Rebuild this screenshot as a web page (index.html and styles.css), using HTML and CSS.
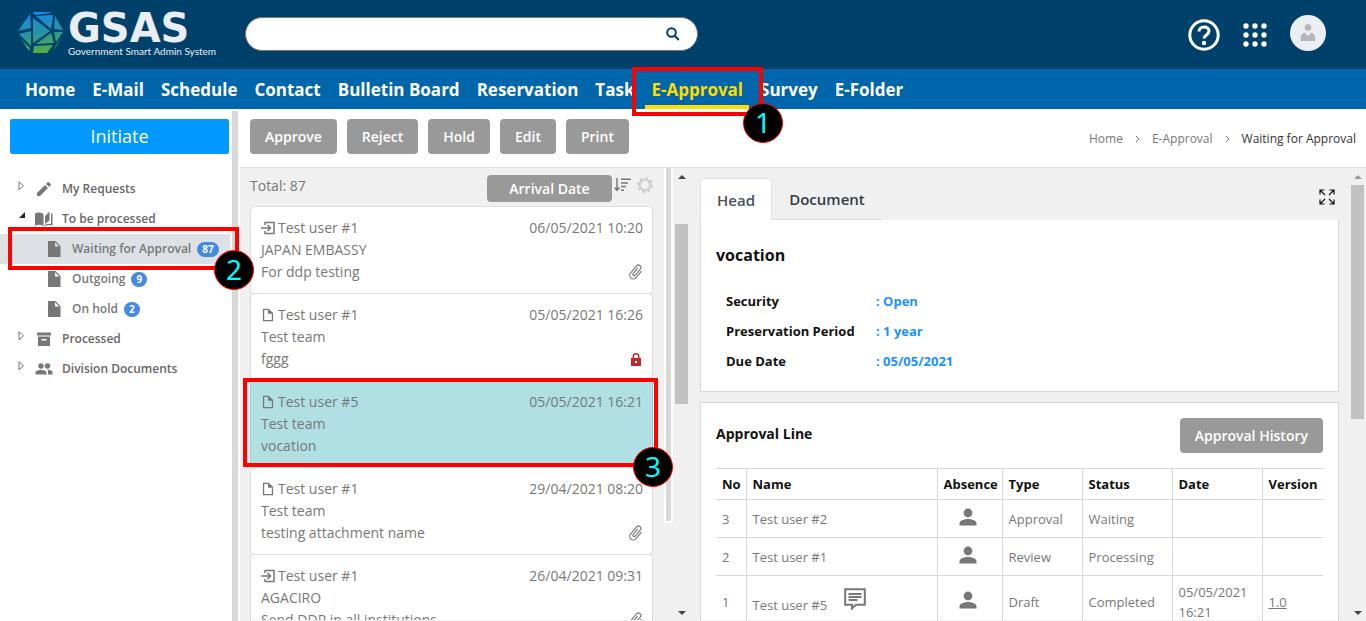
FILE: index.html
```html
<!DOCTYPE html>
<html lang="en">
<head>
<meta charset="utf-8">
<title>GSAS - Waiting for Approval</title>
<link rel="stylesheet" href="styles.css">
</head>
<body>
<svg class="defs" aria-hidden="true">
  <symbol id="i-clip" viewBox="4 0 17 24"><path d="M16.500 6v11.500a4 4 0 0 1-8 0V5a2.500 2.500 0 0 1 5 0v10.500a1 1 0 0 1-2 0V6H10v9.500a2.500 2.500 0 0 0 5 0V5a4 4 0 0 0-8 0v12.500a5.500 5.500 0 0 0 11 0V6z" transform="rotate(40 12 12)"/></symbol>
  <symbol id="i-file" viewBox="2 1 20 22"><path d="M13 2H4v20h16V9l-7-7zM6 20V4h6v6h6v10z"/></symbol>
  <symbol id="i-doc" viewBox="0 0 13 16"><path d="M0 0h7.500L12.500 5v11H0zM7 1.200v4.300h4.300z" fill-rule="evenodd"/></symbol>
  <symbol id="i-in" viewBox="0 0 14 14"><path d="M4 4V1.500h9v11H4V10M0 7h9M6.500 4L9.500 7l-3 3" fill="none" stroke="currentColor" stroke-width="1.500"/></symbol>
  <symbol id="i-person" viewBox="0 0 18 18"><circle cx="9" cy="5" r="4.400"/><path d="M.5 17.500v-2C.5 12.500 5 11 9 11s8.500 1.500 8.500 4.500v2z"/></symbol>
  <symbol id="i-closed" viewBox="0 0 8 10"><path d="M1 .8v8L5.500 4.800z" fill="none" stroke="#777"/></symbol>
</svg>

<header class="topbar">
  <a class="logo" href="#">
    <svg class="logo-mark" viewBox="0 0 46 42">
      <defs><linearGradient id="g" gradientUnits="userSpaceOnUse" x1="18" y1="0" x2="26" y2="42"><stop offset="0" stop-color="#1688ee"/><stop offset=".5" stop-color="#2794a0"/><stop offset="1" stop-color="#55b436"/></linearGradient></defs>
      <g fill="url(#g)">
        <path d="M15 0h17l1 1-16 2zM12 2l1 14L0 19zM1 22l12-3v15zM15 6l17 13-17 12zM18 4l17-1-2 14zM33 21l3 10-18 1zM16 34l19-1-6 8H15zM3 27l9 9-1 3zM37 4l8 14-9-1zM36 20h9l-7 10zM38 33l6-8-9 14z"/>
      </g>
    </svg>
    <span class="logo-text"><b>GSAS</b><small>Government Smart Admin System</small></span>
  </a>
  <form class="search">
    <input type="text" aria-label="Search">
    <button type="button" aria-label="Search"><svg viewBox="0 0 14 14"><circle cx="5.500" cy="5.500" r="4.300"/><path d="M8.700 8.700L12.800 13"/></svg></button>
  </form>
  <div class="top-actions">
    <button class="help" type="button" aria-label="Help"><svg viewBox="0 0 32 32"><circle cx="16" cy="16" r="14.200"/><path d="M11 12.500c0-6 10-6 10-.5 0 4-5 3.800-5 7.500"/><circle class="dot" cx="16" cy="24" r="2.200"/></svg></button>
    <button class="apps" type="button" aria-label="Apps"><svg viewBox="0 0 24 24"><g><circle cx="3" cy="3" r="2.700"/><circle cx="12" cy="3" r="2.700"/><circle cx="21" cy="3" r="2.700"/><circle cx="3" cy="12" r="2.700"/><circle cx="12" cy="12" r="2.700"/><circle cx="21" cy="12" r="2.700"/><circle cx="3" cy="21" r="2.700"/><circle cx="12" cy="21" r="2.700"/><circle cx="21" cy="21" r="2.700"/></g></svg></button>
    <button class="avatar" type="button" aria-label="Profile"><svg viewBox="0 0 16 18"><circle cx="8" cy="3.500" r="3.200"/><path d="M1 17c-1-4 0-7 3.500-8.500L8 12l3.500-3.500C15 10 16 13 15 17z"/></svg></button>
  </div>
</header>

<nav class="mainnav">
  <a href="#">Home</a><a href="#">E-Mail</a><a href="#">Schedule</a><a href="#">Contact</a><a href="#">Bulletin Board</a><a href="#">Reservation</a><a href="#">Task</a><a class="current" href="#">E-Approval</a><a href="#">Survey</a><a href="#">E-Folder</a>
</nav>

<div class="body">
  <aside class="sidebar">
    <button class="initiate" type="button">Initiate</button>
    <div class="tree">
      <a href="#"><svg class="tw"><use href="#i-closed"/></svg><svg class="ti" viewBox="0 0 16 16"><path d="M1 12v3h3l8-8-3-3zM14.700 4.300a1 1 0 0 0 0-1.200l-1.800-1.800a1 1 0 0 0-1.200 0L10 3l3 3z"/></svg>My Requests</a>
      <a href="#"><svg class="tw open" viewBox="0 0 8 10"><path d="M7 1v6H1z"/></svg><svg class="ti" viewBox="0 0 18 16"><path d="M0 2.500C3 1 6 1.500 8.500 3v12C6 13.500 3 13.500 0 14.500zM10 5l4.500-4.500v9L10 13zM16 2.500h1.500v12c-3-1-5-.8-8 .7V14c2-1.200 4.500-1.500 6.500-1z"/></svg>To be processed</a>
      <a class="sub selected" href="#"><svg class="td"><use href="#i-doc"/></svg>Waiting for Approval<span class="badge">87</span></a>
      <a class="sub" href="#"><svg class="td"><use href="#i-doc"/></svg>Outgoing<span class="badge">9</span></a>
      <a class="sub" href="#"><svg class="td"><use href="#i-doc"/></svg>On hold<span class="badge">2</span></a>
      <a href="#"><svg class="tw"><use href="#i-closed"/></svg><svg class="ti" viewBox="0 0 16 16"><path fill-rule="evenodd" d="M1 1.500h14v3H1zM2 5.500h12V15H2zM5.500 8v1.500h5V8z"/></svg>Processed</a>
      <a href="#"><svg class="tw"><use href="#i-closed"/></svg><svg class="ti" viewBox="0 0 18 16"><circle cx="6" cy="5" r="2.700"/><circle cx="12.500" cy="5" r="2.700"/><path d="M.5 13.500v-2c0-3.500 11-3.500 11 0v2zM13 13.500h4.500v-2c0-2-2.500-3-5.500-2.700 1 .7 1.200 1.600 1 4.700z"/></svg>Division Documents</a>
    </div>
  </aside>
  <div class="splitter"></div>

  <main class="main">
    <div class="toolbar">
      <div class="actions">
        <button class="btn" type="button">Approve</button><button class="btn" type="button">Reject</button><button class="btn" type="button">Hold</button><button class="btn" type="button">Edit</button><button class="btn" type="button">Print</button>
      </div>
      <div class="crumbs">
        <a href="#">Home</a><svg viewBox="0 0 5 8"><path d="M1 1l3 3-3 3"/></svg><a href="#">E-Approval</a><svg viewBox="0 0 5 8"><path d="M1 1l3 3-3 3"/></svg><span>Waiting for Approval</span>
      </div>
    </div>

    <div class="panes">
      <section class="list">
        <div class="list-head">
          <span class="total">Total: 87</span>
          <button class="btn sort" type="button">Arrival Date</button>
          <svg class="sort-ic" viewBox="0 0 17 14"><path d="M3 0v12M.5 9.500L3 12.300l2.500-2.800M7 1.300h10M7 5h7M7 8.600h5M7 12.300h3"/></svg>
          <svg class="gear" viewBox="0 0 16 16"><circle cx="8" cy="8" r="5.300"/><circle class="teeth" cx="8" cy="8" r="7"/></svg>
        </div>
        <article class="card"><div><svg class="in"><use href="#i-in"/></svg>Test user #1<time>06/05/2021 10:20</time></div><div>JAPAN EMBASSY</div><div>For ddp testing<svg class="clip"><use href="#i-clip"/></svg></div></article>
        <article class="card"><div><svg class="in"><use href="#i-file"/></svg>Test user #1<time>05/05/2021 16:26</time></div><div>Test team</div><div>fggg<svg class="lock" viewBox="0 0 10 13"><path fill-rule="evenodd" d="M0 5h1.500V3.500a3.500 3.500 0 0 1 7 0V5H10v8H0zM3 5h4V3.500a2 2 0 0 0-4 0zM4 8v2h2V8z"/></svg></div></article>
        <article class="card chosen"><div><svg class="in"><use href="#i-file"/></svg>Test user #5<time>05/05/2021 16:21</time></div><div>Test team</div><div>vocation</div></article>
        <article class="card"><div><svg class="in"><use href="#i-file"/></svg>Test user #1<time>29/04/2021 08:20</time></div><div>Test team</div><div>testing attachment name<svg class="clip"><use href="#i-clip"/></svg></div></article>
        <article class="card"><div><svg class="in"><use href="#i-in"/></svg>Test user #1<time>26/04/2021 09:31</time></div><div>AGACIRO</div><div>Send DDP in all institutions<svg class="clip"><use href="#i-clip"/></svg></div></article>
      </section>
      <div class="splitter inner"></div>
      <div class="scroll mid"><i class="up"></i><i class="thumb"></i><i class="down"></i></div>

      <section class="detail">
        <div class="tabs">
          <button class="tab on" type="button">Head</button><button class="tab" type="button">Document</button>
          <svg class="expand" viewBox="0 0 16 16"><path d="M1 5.500V1h4.500M1 1l5 5M10.500 1H15v4.500M15 1l-5 5M1 10.500V15h4.500M1 15l5-5M15 10.500V15h-4.500M15 15l-5-5"/></svg>
        </div>
        <div class="panel first">
          <h2>vocation</h2>
          <dl><dt>Security</dt><dd>: Open</dd><dt>Preservation Period</dt><dd>: 1 year</dd><dt>Due Date</dt><dd>: 05/05/2021</dd></dl>
        </div>
        <div class="panel second">
          <div class="panel-head"><h3>Approval Line</h3><button class="btn" type="button">Approval History</button></div>
          <table>
            <colgroup><col class="c-no"><col><col class="c-abs"><col class="c-type"><col class="c-wide"><col class="c-wide"><col class="c-ver"></colgroup>
            <thead><tr><th>No</th><th>Name</th><th>Absence</th><th>Type</th><th>Status</th><th>Date</th><th>Version</th></tr></thead>
            <tbody>
              <tr><td>3</td><td>Test user #2</td><td class="mid-cell"><svg class="person"><use href="#i-person"/></svg></td><td>Approval</td><td>Waiting</td><td></td><td></td></tr>
              <tr><td>2</td><td>Test user #1</td><td class="mid-cell"><svg class="person"><use href="#i-person"/></svg></td><td>Review</td><td>Processing</td><td></td><td></td></tr>
              <tr class="tall"><td>1</td><td>Test user #5<svg class="note" viewBox="0 0 22 22"><path d="M1.200 1.200h19.600v15.600H12L8 20.500v-3.700H1.200zM4.500 6h13M4.500 9h13M4.500 12h9"/></svg></td><td class="mid-cell"><svg class="person"><use href="#i-person"/></svg></td><td>Draft</td><td>Completed</td><td>05/05/2021 16:21</td><td><a href="#">1.0</a></td></tr>
            </tbody>
          </table>
        </div>
      </section>
      <div class="scroll far"><i class="up"></i><i class="thumb"></i><i class="down"></i></div>
    </div>
  </main>
</div>

<div class="mark m1"><span>1</span></div>
<div class="mark m2"><span>2</span></div>
<div class="mark m3"><span>3</span></div>
</body>
</html>
```
FILE: styles.css
```css
* { box-sizing: border-box; }
body {
  margin: 0; height: 100vh; overflow: hidden; position: relative;
  display: flex; flex-direction: column;
  font: 14px/22px "Open Sans", "Noto Sans", sans-serif; color: #777; background: #fff;
}
a { color: inherit; text-decoration: none; }
button { font: inherit; border: 0; padding: 0; background: none; color: inherit; }
svg { flex: none; fill: currentColor; }
.defs { position: absolute; width: 0; height: 0; }

/* top bar */
.topbar { flex: none; height: 69px; display: flex; align-items: center; background: #00416b; color: #fff; padding: 0 40px 0 18px; }
.logo { display: flex; gap: 4px; width: 227px; color: #e8eef3; }
.logo-mark { width: 46px; height: 42px; }
.logo-text { display: flex; flex-direction: column; }
.logo-text b { font: bold 40px/32px "DejaVu Sans", sans-serif; }
.logo-text small { font: 10px/14px Lato, sans-serif; white-space: nowrap; }
.search { display: flex; width: 453px; height: 34px; margin-bottom: 2px; background: #fff; border: 1px solid #777; border-radius: 17px; padding: 0 17px 0 16px; align-items: center; }
.search input { flex: 1; min-width: 0; border: 0; outline: 0; background: none; font: inherit; }
.search button { display: flex; }
.search svg { width: 14px; height: 14px; fill: none; stroke: #00416b; stroke-width: 2; }
.top-actions { margin-left: auto; display: flex; align-items: center; gap: 23px; }
.top-actions button { display: flex; }
.help svg { width: 32px; height: 32px; fill: none; stroke: #fff; stroke-width: 3; }
.help .dot { fill: #fff; stroke: none; }
.apps svg { width: 24px; height: 24px; }
.top-actions .avatar { width: 36px; height: 36px; margin-bottom: 4px; border-radius: 50%; background: #eceff1; color: #b4b6b8; align-items: center; justify-content: center; }
.avatar svg { width: 16px; height: 18px; }

/* navigation */
.mainnav { flex: none; height: 40px; display: flex; gap: 5px; padding-left: 19px; background: #0066ab; color: #fff; font-weight: 700; font-size: 17px; }
.mainnav a { padding: 4px 6px 0; border-bottom: 4px solid transparent; line-height: 34px; white-space: nowrap; }
.mainnav .current { color: #ffdc00; border-color: #ffdc00; }

/* page frame */
.body { flex: 1; min-height: 0; display: flex; }
.sidebar { width: 232px; flex: none; padding-top: 10px; }
.initiate { display: block; width: 219px; height: 35px; margin-left: 10px; padding-bottom: 2px; border-radius: 2px; background: #0099ff; color: #fff; font-size: 18px; }
.tree { padding-top: 20px; font-size: 12px; font-weight: 600; color: #666; }
.tree a { display: flex; align-items: center; height: 30px; padding-left: 18px; white-space: nowrap; }
.tree .sub { padding-left: 48px; color: #777; margin-right: 2px; }
.tree .selected { background: #dde1e6; }
.tw { width: 8px; height: 10px; margin: 0 9px 6px 0; }
.tw.open { color: #222; }
.ti { width: 18px; height: 16px; margin-right: 9px; color: #777; }
.td { width: 13px; height: 16px; margin-right: 11px; color: #777; }
.badge { margin-left: 6px; min-width: 15px; height: 15px; border-radius: 8px; padding: 0 5px; background: #4489e4; color: #fff; font-size: 10px; line-height: 15px; font-weight: 700; text-align: center; }
.splitter { flex: none; width: 6px; margin-top: 2px; background: #d8d8d8; }

.main { flex: 1; min-width: 0; display: flex; flex-direction: column; margin-left: 2px; }
.toolbar { flex: none; height: 59px; padding: 10px; border-bottom: 1px solid #ddd; display: flex; justify-content: space-between; }
.actions { display: flex; gap: 10px; }
.btn { height: 35px; padding: 0 15px; border-radius: 4px; background: #999; color: #fff; font-weight: 600; white-space: nowrap; }
.crumbs { display: flex; align-items: center; gap: 12px; height: 39px; font-size: 12px; }
.crumbs svg { width: 5px; height: 8px; fill: none; stroke: #777; }
.crumbs span { color: #333; }

.panes { flex: 1; min-height: 0; display: flex; background: #f0f0f0; }

/* document list */
.list { flex: none; width: 424px; padding: 0 11px 0 10px; margin-bottom: 1px; overflow: hidden; }
.list-head { display: flex; align-items: flex-start; height: 38px; padding-top: 7px; }
.total { margin-right: auto; }
.list-head .sort { width: 125px; height: 27px; margin-right: 2px; }
.sort-ic { width: 17px; height: 14px; margin-top: 3px; fill: none; stroke: #777; stroke-width: 1.5; }
.gear { width: 16px; height: 16px; margin: 2px 0 0 6px; fill: none; stroke: #ccc; stroke-width: 2; }
.gear .teeth { stroke-width: 2; stroke-dasharray: 2.5 3; }
.card { height: 88px; margin-bottom: -1px; padding: 10px 9px 10px 10px; border: 1px solid #ddd; border-radius: 4px; background: #fff; }
.card div { display: flex; align-items: center; }
.card time { margin-left: auto; }
.card.chosen { background: #b0dfe4; border-color: #a0cdd2; }
.in { width: 14px; height: 14px; margin-right: 3px; }
.clip { width: 14px; height: 18px; margin-left: auto; }
.lock { width: 10px; height: 13px; margin: 0 2px 0 auto; color: #bb2a30; }

.inner { width: 9px; height: 355px; margin: 0; border: 2px solid #fff; border-top: 0; }

.scroll { flex: none; width: 17px; display: flex; flex-direction: column; align-items: center; padding: 7px 0 6px; }
.scroll i { width: 0; }
.scroll .up { border: 4px solid transparent; border-top: 0; border-bottom-color: #444; }
.scroll .down { margin-top: auto; border: 4px solid transparent; border-bottom: 0; border-top-color: #444; }
.scroll .thumb { width: 13px; background: #c1c1c1; }
.mid .thumb { height: 180px; margin-top: 45px; }
.far .thumb { height: 234px; margin-top: 6px; }
.far .up { border-bottom-color: #999; }

/* detail */
.detail { flex: 1; min-width: 0; padding: 10px 10px 0; margin-bottom: 1px; overflow: hidden; }
.tabs { display: flex; height: 42px; }
.tab { width: 72px; color: #495057; font-size: 15px; font-weight: 600; border-bottom: 1px solid #ddd; }
.tab:nth-child(2) { width: 110px; color: #333c44; }
.tab.on { background: #fff; border: 1px solid #dde; border-bottom: 0; border-radius: 4px 4px 0 0; }
.expand { width: 16px; height: 16px; margin: 11px 4px 0 auto; fill: none; stroke: #111; stroke-width: 1.2; }
.panel { background: #fff; border: 1px solid #d8d8d8; padding: 0 15px; }
.first { border-top: 0; height: 172px; padding-top: 24px; }
.second { margin-top: 10px; }
h2, h3 { margin: 0; color: #111; font-weight: 700; }
h2 { font-size: 16px; line-height: 22px; }
h3 { font-size: 14px; padding-bottom: 4px; }
dl { display: grid; grid-template-columns: 150px 1fr; margin: 20px 0 0 10px; font-size: 13px; line-height: 30px; font-weight: 700; }
dt { color: #111; }
dd { margin: 0; color: #1e90ff; }
.panel-head { display: flex; justify-content: space-between; align-items: center; height: 65px; }
table { width: 100%; table-layout: fixed; border-collapse: collapse; font-size: 13px; line-height: 20px; }
th, td { border: 1px solid #d8d8d8; padding: 0 4px 0 6px; text-align: left; height: 38px; }
th { height: 31px; color: #111; font-weight: 700; }
th:first-child, td:first-child { border-left: 0; }
th:last-child, td:last-child { border-right: 0; }
.tall td { height: 52px; }
.c-no { width: 30px; }
.c-abs { width: 65px; }
.c-type { width: 80px; }
.c-wide { width: 90px; }
.c-ver { width: 61px; }
td a { text-decoration: underline; }
td.mid-cell { padding: 0 0 0 21px; }
.person { display: block; width: 18px; height: 18px; margin-bottom: 3px; }
.note { width: 22px; height: 22px; margin-left: 17px; fill: none; stroke: #777; stroke-width: 2; }

/* numbered callouts lying over the page */
.mark { position: absolute; border: 4px solid #f00; }
.mark span { position: absolute; right: -24px; bottom: -31px; width: 40px; height: 40px; border: 1px solid #f00; border-radius: 50%; background: #000; color: #0ff; font: 28px/37px "Noto Sans", sans-serif; text-align: center; }
.m1 { left: 632px; top: 67px; width: 131px; height: 49px; }
.m2 { left: 8px; top: 227px; width: 231px; height: 43px; }
.m2 span { right: -19px; bottom: -24px; }
.m3 { left: 243px; top: 378px; width: 415px; height: 89px; }
.m3 span { right: -19px; bottom: -24px; }
```
